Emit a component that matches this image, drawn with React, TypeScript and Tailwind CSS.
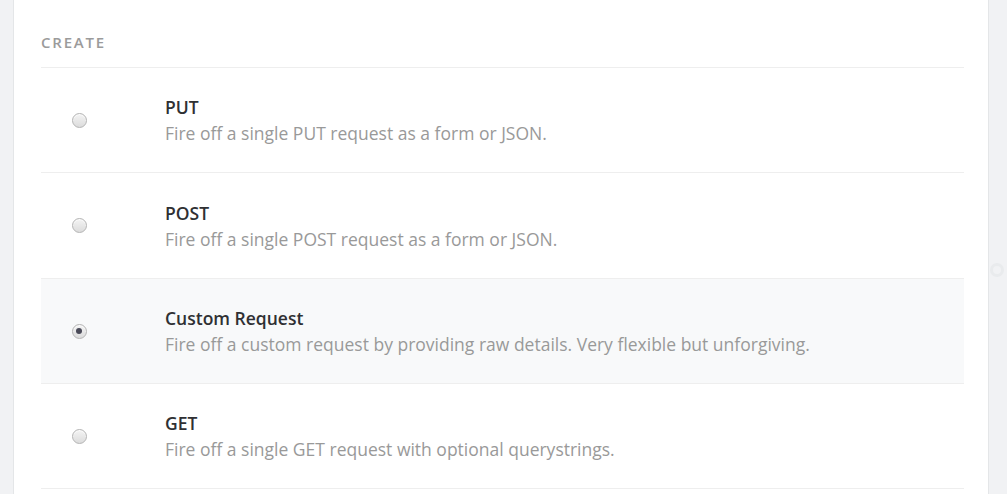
import React from 'react';

type Option = {
  id: string;
  title: string;
  description: string;
};

const OPTIONS: Option[] = [
  { id: 'put', title: 'PUT', description: 'Fire off a single PUT request as a form or JSON.' },
  { id: 'post', title: 'POST', description: 'Fire off a single POST request as a form or JSON.' },
  {
    id: 'custom',
    title: 'Custom Request',
    description: 'Fire off a custom request by providing raw details. Very flexible but unforgiving.',
  },
  { id: 'get', title: 'GET', description: 'Fire off a single GET request with optional querystrings.' },
];

function Radio({ checked }: { checked: boolean }) {
  return (
    <span className="flex h-[15px] w-[15px] items-center justify-center rounded-full border border-[#b4b4b4] bg-gradient-to-b from-[#f4f4f4] to-[#dcdcdc] shadow-[inset_0_1px_1px_rgba(255,255,255,0.8)]">
      {checked && <span className="h-[6px] w-[6px] rounded-full bg-[#4a4a58]" />}
    </span>
  );
}

export default function App() {
  const [selected, setSelected] = React.useState('custom');

  return (
    <div className="flex h-[494px] w-full overflow-hidden bg-[#f1f2f4] font-['Open_Sans',sans-serif]">
      <div className="w-[14px] shrink-0 border-r border-[#e4e6e8]" />
      <div className="flex-1 bg-white pl-[27px] pr-[24px]">
        <h3 className="h-[68px] border-b border-[#eeeeee] pt-[31px] text-[15px] font-semibold uppercase leading-[22px] tracking-[0.12em] text-[#9b9b9b]">
          Create
        </h3>
        {OPTIONS.map((opt, i) => {
          const active = selected === opt.id;
          return (
            <label
              key={opt.id}
              onClick={() => setSelected(opt.id)}
              className={`flex cursor-pointer items-center border-b border-[#eeeeee] ${i === 1 ? 'h-[106px]' : 'h-[105px]'} ${active ? 'bg-[#f8f9fa]' : 'bg-white'}`}
            >
              <div className="flex w-[76px] shrink-0 justify-center">
                <Radio checked={active} />
              </div>
              <div className="ml-[48px]">
                <div className="text-[17.5px] font-semibold leading-[26px] text-[#2f3033]">{opt.title}</div>
                <div className="text-[17.5px] leading-[26px] text-[#999999]">{opt.description}</div>
              </div>
            </label>
          );
        })}
      </div>
      <div className="relative w-[19px] shrink-0 border-l border-[#e4e6e8]">
        <span className="absolute left-[1px] top-[263px] h-[14px] w-[14px] rounded-full border-[3px] border-[#e9ebed]" />
      </div>
    </div>
  );
}
